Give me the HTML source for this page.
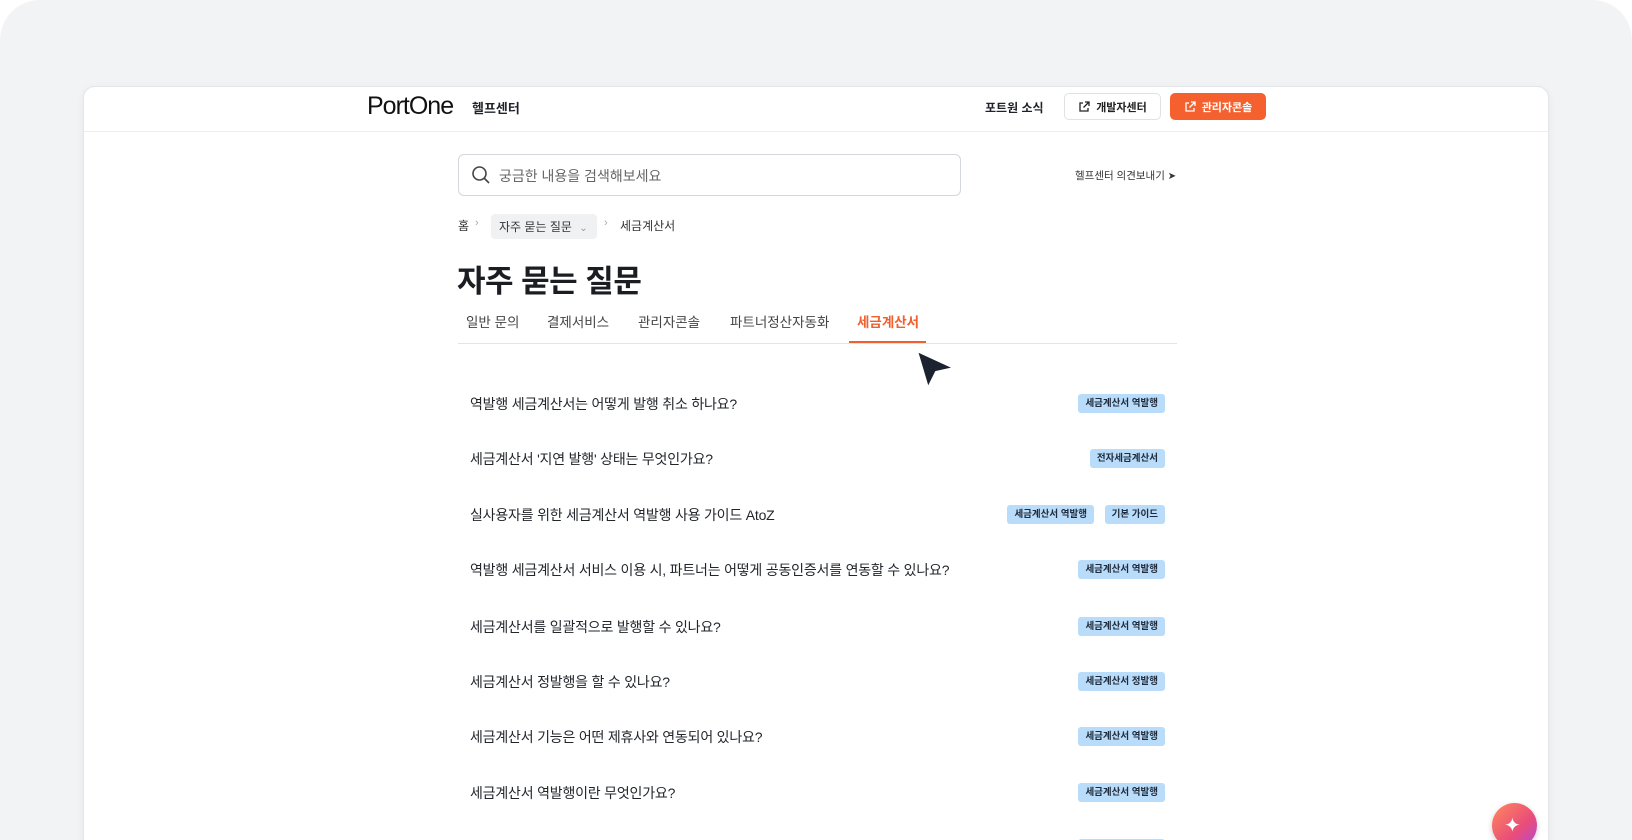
<!DOCTYPE html>
<html><head><meta charset="utf-8"><style>
*{margin:0;padding:0;box-sizing:border-box}
html,body{width:1632px;height:840px;overflow:hidden}
body{background:#fff;font-family:"Liberation Sans","Noto Sans CJK KR",sans-serif;color:#1f2329;position:relative}
.clip{position:absolute;left:0;top:0;width:1632px;height:840px;overflow:hidden}
.bg{position:absolute;left:0;top:0;width:1632px;height:840px;background:#f2f3f5;border-radius:40px 40px 0 0}
.win{position:absolute;left:83px;top:86px;width:1466px;height:780px;background:#fff;border:1px solid #e3e5e8;border-radius:12px;box-shadow:0 2px 8px rgba(0,0,0,.05)}
.hdr{position:absolute;left:0;top:0;right:0;height:45px;border-bottom:1px solid #eceef0}
.abs{position:absolute;white-space:nowrap}
.btn{position:absolute;height:27px;border-radius:5px;font-size:11px;font-weight:bold;display:flex;align-items:center;justify-content:center;gap:6px}
.tag{position:absolute;right:383px;height:19px;background:#b8dcfa;color:#1f2a3a;font-size:9.5px;font-weight:bold;border-radius:3px;padding:0 7px;line-height:19px}
.q{position:absolute;left:386px;font-size:14px;color:#22262b;letter-spacing:-0.2px}
.tab{position:absolute;top:224px;font-size:13.5px;color:#444}
</style></head><body>
<div class="clip">
<div class="bg"></div>
<div class="win">
 <div class="hdr">
  <div class="abs" style="left:283px;top:5px;font-size:25px;letter-spacing:-1px;color:#111;font-weight:500">PortOne</div>
  <div class="abs" style="left:388px;top:11px;font-size:13px;font-weight:bold">헬프센터</div>
  <div class="abs" style="left:901px;top:12px;font-size:12px;font-weight:bold">포트원 소식</div>
  <div class="btn" style="left:980px;top:6px;width:97px;border:1px solid #dfe1e4;color:#222">
   <svg width="12" height="12" viewBox="0 0 12 12" fill="none" stroke="#222" stroke-width="1.3"><path d="M5 2H2v8h8V7M7 1h4v4M11 1L5.5 6.5"/></svg>개발자센터</div>
  <div class="btn" style="left:1086px;top:6px;width:96px;background:#f5612e;color:#fff">
   <svg width="12" height="12" viewBox="0 0 12 12" fill="none" stroke="#fff" stroke-width="1.3"><path d="M5 2H2v8h8V7M7 1h4v4M11 1L5.5 6.5"/></svg>관리자콘솔</div>
 </div>
 <div class="abs" style="left:374px;top:67px;width:503px;height:42px;border:1px solid #d4d7db;border-radius:6px">
  <svg style="position:absolute;left:12px;top:10px" width="20" height="20" viewBox="0 0 20 20" fill="none" stroke="#444" stroke-width="1.6"><circle cx="8.5" cy="8.5" r="6.5"/><path d="M13.5 13.5L18 18"/></svg>
  <div class="abs" style="left:40px;top:11px;font-size:14px;color:#666">궁금한 내용을 검색해보세요</div>
 </div>
 <div class="abs" style="left:991px;top:81px;font-size:10.5px;color:#333">헬프센터 의견보내기 <span style="font-size:10px">➤</span></div>
 <div class="abs" style="left:374px;top:130px;font-size:12px;color:#333">홈</div>
 <div class="abs" style="left:391px;top:130px;font-size:11px;color:#aaa">›</div>
 <div class="abs" style="left:407px;top:127px;width:106px;height:25px;background:#f0f1f3;border-radius:4px;font-size:12px;color:#333;padding:4px 8px">자주 묻는 질문 <span style="color:#999;font-size:10px;margin-left:4px">⌄</span></div>
 <div class="abs" style="left:520px;top:130px;font-size:11px;color:#aaa">›</div>
 <div class="abs" style="left:536px;top:130px;font-size:12px;color:#333">세금계산서</div>
 <div class="abs" style="left:373px;top:169px;font-size:31px;font-weight:bold;color:#1a1d21;letter-spacing:-0.5px">자주 묻는 질문</div>
 <div class="tab" style="left:382px">일반 문의</div>
 <div class="tab" style="left:463px">결제서비스</div>
 <div class="tab" style="left:554px">관리자콘솔</div>
 <div class="tab" style="left:646px">파트너정산자동화</div>
 <div class="tab" style="left:773px;color:#f0602e;font-weight:bold">세금계산서</div>
 <div class="abs" style="left:374px;top:256px;width:719px;height:1px;background:#e2e4e7"></div>
 <div class="abs" style="left:765px;top:254px;width:77px;height:2px;background:#f0602e"></div>
 <div class="q" style="top:307px">역발행 세금계산서는 어떻게 발행 취소 하나요?</div><div class="tag" style="top:307px">세금계산서 역발행</div>
 <div class="q" style="top:362px">세금계산서 '지연 발행' 상태는 무엇인가요?</div><div class="tag" style="top:362px">전자세금계산서</div>
 <div class="q" style="top:418px">실사용자를 위한 세금계산서 역발행 사용 가이드 AtoZ</div><div class="tag" style="top:418px">기본 가이드</div><div class="tag" style="top:418px;right:454px">세금계산서 역발행</div>
 <div class="q" style="top:473px">역발행 세금계산서 서비스 이용 시, 파트너는 어떻게 공동인증서를 연동할 수 있나요?</div><div class="tag" style="top:473px">세금계산서 역발행</div>
 <div class="q" style="top:530px">세금계산서를 일괄적으로 발행할 수 있나요?</div><div class="tag" style="top:530px">세금계산서 역발행</div>
 <div class="q" style="top:585px">세금계산서 정발행을 할 수 있나요?</div><div class="tag" style="top:585px">세금계산서 정발행</div>
 <div class="q" style="top:640px">세금계산서 기능은 어떤 제휴사와 연동되어 있나요?</div><div class="tag" style="top:640px">세금계산서 역발행</div>
 <div class="q" style="top:696px">세금계산서 역발행이란 무엇인가요?</div><div class="tag" style="top:696px">세금계산서 역발행</div>
 <div class="tag" style="top:752px">세금계산서 역발행</div>
 <div class="abs" style="left:1408px;top:716px;width:45px;height:45px;border-radius:50%;background:linear-gradient(135deg,#ff8a5c,#e94c7a 60%,#b04ad8);box-shadow:0 2px 6px rgba(0,0,0,.2)">
  <div class="abs" style="left:12px;top:10px;color:#fff;font-size:20px">✦</div></div>
</div>
<svg style="position:absolute;left:912px;top:348px" width="46" height="44" viewBox="0 0 46 44"><path d="M5 3L42 20L24 24L16 40Z" fill="#1c2230" stroke="#fff" stroke-width="2" stroke-linejoin="round"/></svg>
</div>
</body></html>
